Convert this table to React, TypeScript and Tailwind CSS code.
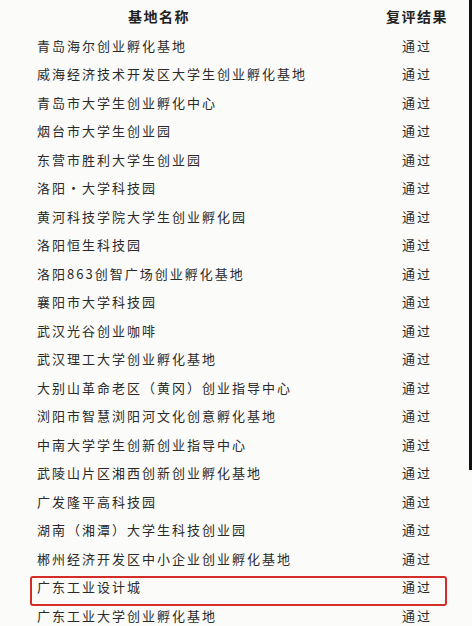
const bases = [
  '青岛海尔创业孵化基地',
  '威海经济技术开发区大学生创业孵化基地',
  '青岛市大学生创业孵化中心',
  '烟台市大学生创业园',
  '东营市胜利大学生创业园',
  '洛阳•大学科技园',
  '黄河科技学院大学生创业孵化园',
  '洛阳恒生科技园',
  '洛阳863创智广场创业孵化基地',
  '襄阳市大学科技园',
  '武汉光谷创业咖啡',
  '武汉理工大学创业孵化基地',
  '大别山革命老区（黄冈）创业指导中心',
  '浏阳市智慧浏阳河文化创意孵化基地',
  '中南大学学生创新创业指导中心',
  '武陵山片区湘西创新创业孵化基地',
  '广发隆平高科技园',
  '湖南（湘潭）大学生科技创业园',
  '郴州经济开发区中小企业创业孵化基地',
  '广东工业设计城',
  '广东工业大学创业孵化基地',
]

const font = '[font-family:"Noto_Sans_CJK_SC","Noto_Sans",sans-serif]'

const App = () => {
  return (
    <div className={`relative w-[472px] h-[626px] overflow-hidden bg-[#fbfbfa] text-[#2a2a2a] ${font}`}>
      {/* dark scan edge on the right */}
      <div className="absolute right-0 top-0 w-[3px] h-[470px] bg-[#111]" />

      <div className="flex flex-col pt-[1px]">
        {/* header */}
        <div className="flex items-center h-[30px] text-[14px] font-semibold tracking-[1.5px] text-[#222]">
          <div className="flex-1 pl-[128px]">基地名称</div>
          <div className="w-[62px] mr-[24px] text-center">复评结果</div>
        </div>

        {bases.map((name, i) => (
          <div key={name} className="relative flex items-center h-[28.5px] text-[13px] tracking-[2px]">
            {i === 19 && (
              <span className="absolute left-[30px] right-[25px] top-[3px] h-[30px] border-[2.5px] border-[#d42c28] rounded-[3px]" />
            )}
            <div className="flex-1 pl-[37px] whitespace-nowrap">{name}</div>
            <div className="w-[62px] mr-[24px] text-center">通过</div>
          </div>
        ))}
      </div>
    </div>
  )
}

export default App
